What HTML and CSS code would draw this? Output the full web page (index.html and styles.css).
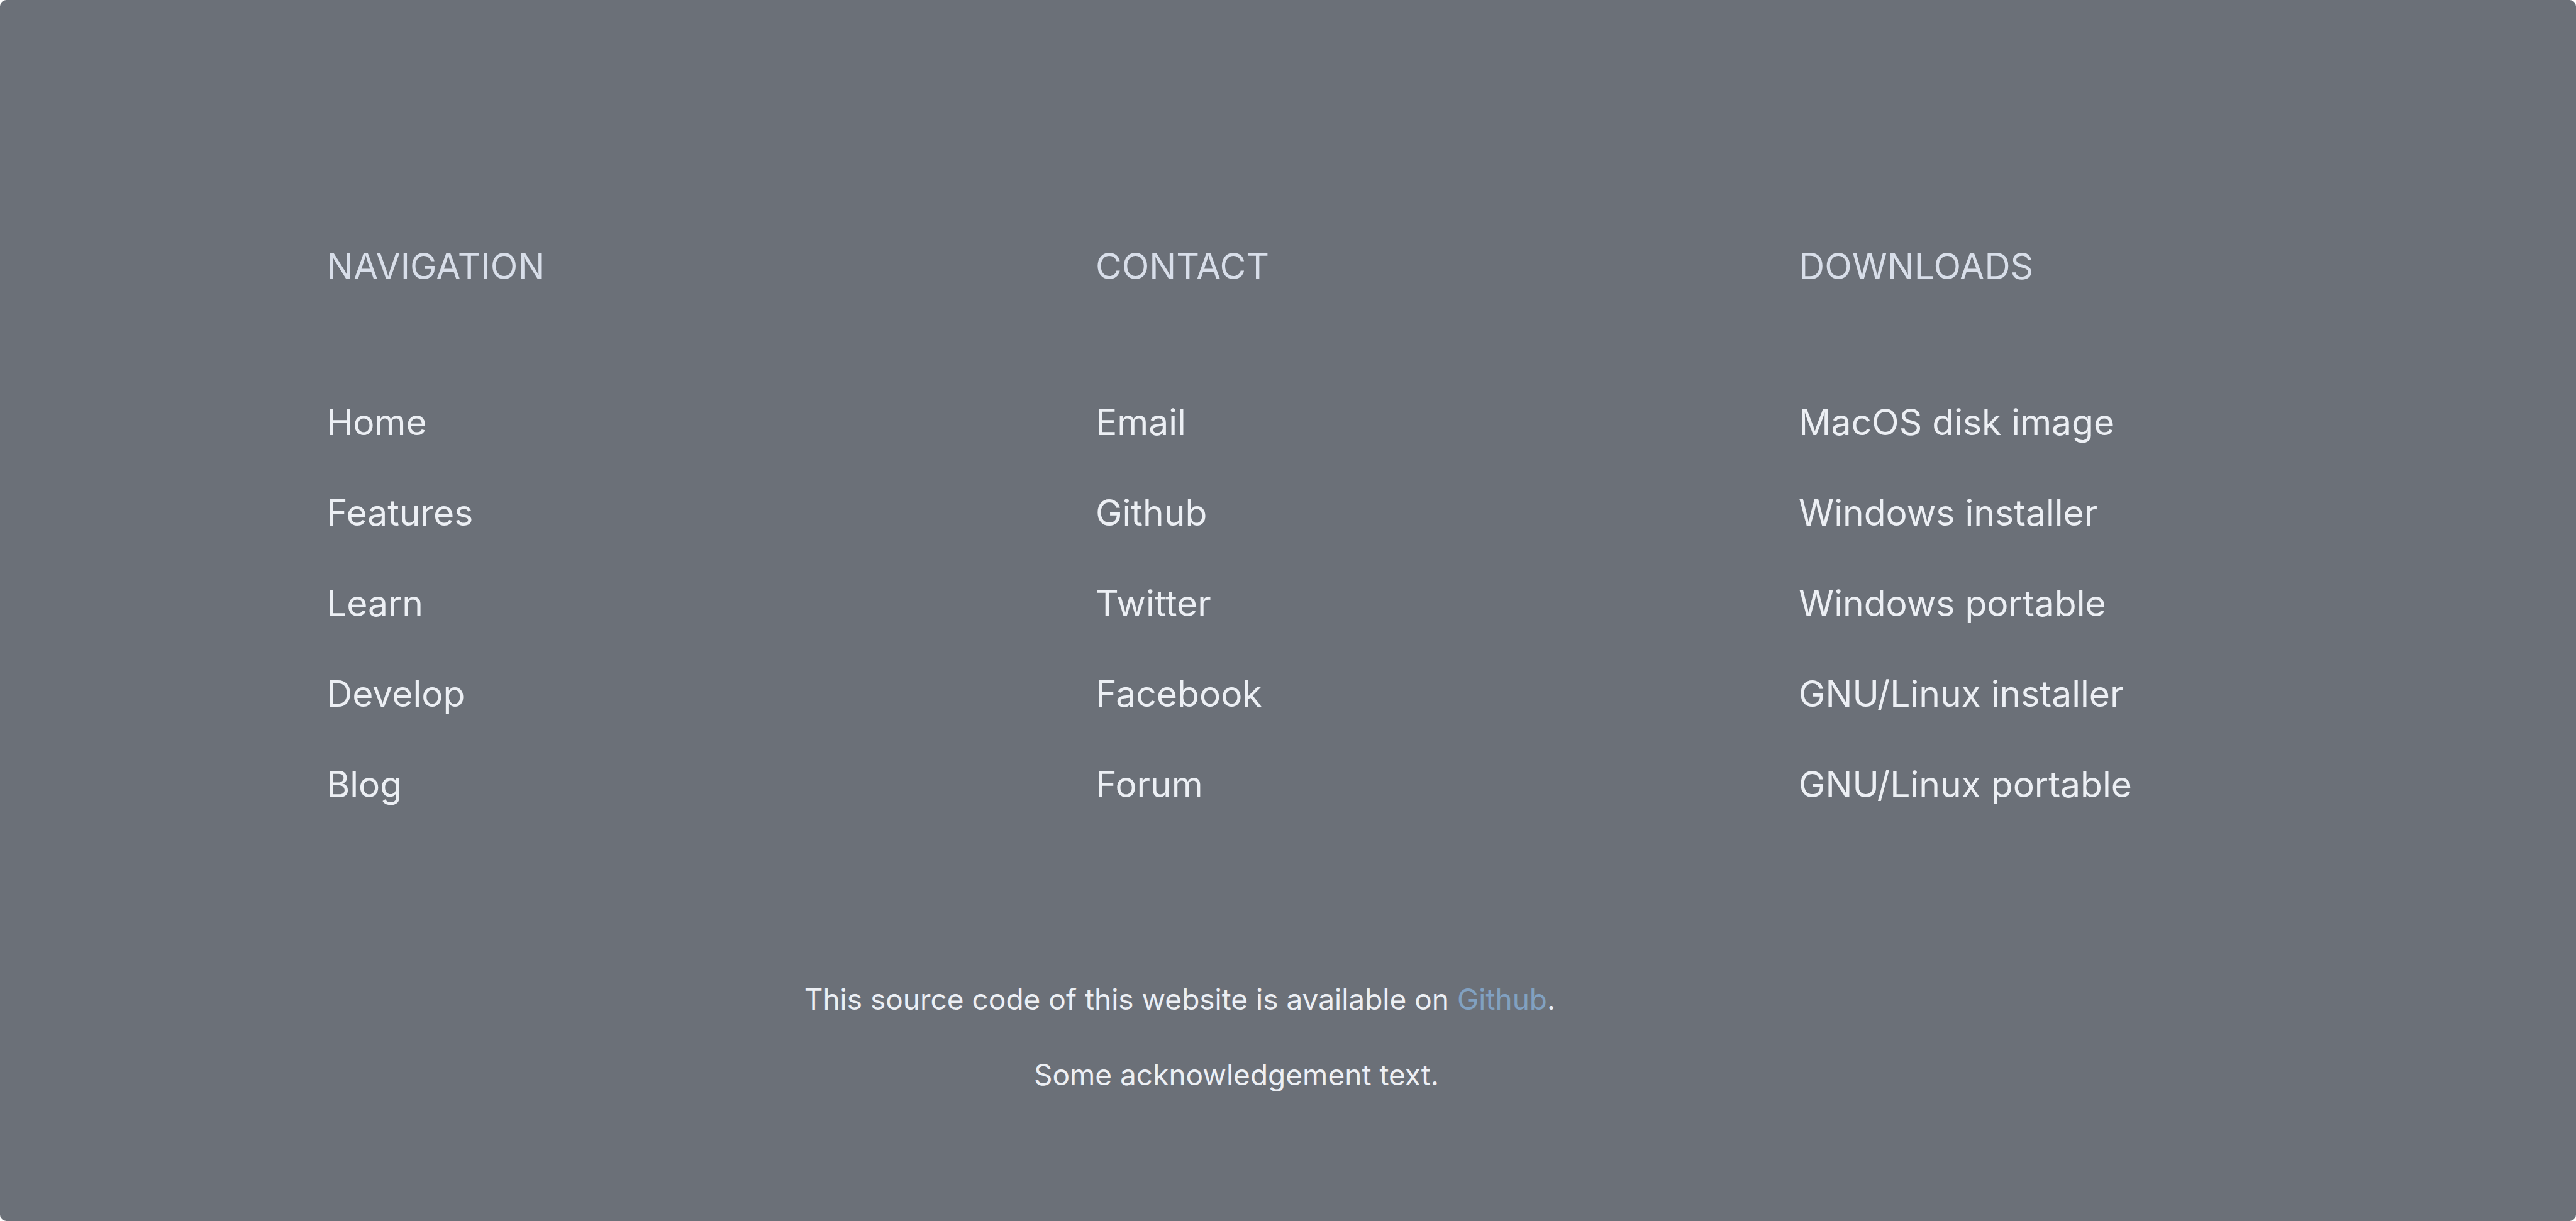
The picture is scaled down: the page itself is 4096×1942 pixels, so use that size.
FILE: index.html
```html
<!DOCTYPE html>
<html lang="en">
<head>
<meta charset="utf-8">
<title>Footer</title>
<link rel="stylesheet" href="styles.css">
</head>
<body>
<footer class="footer">
  <div class="columns">
    <nav class="column" aria-labelledby="navigation">
      <h2 class="title" id="navigation">NAVIGATION</h2>
      <ul class="links">
        <li><a href="#home">Home</a></li>
        <li><a href="#features">Features</a></li>
        <li><a href="#learn">Learn</a></li>
        <li><a href="#develop">Develop</a></li>
        <li><a href="#blog">Blog</a></li>
      </ul>
    </nav>
    <nav class="column" aria-labelledby="contact">
      <h2 class="title" id="contact">CONTACT</h2>
      <ul class="links">
        <li><a href="#email">Email</a></li>
        <li><a href="#github">Github</a></li>
        <li><a href="#twitter">Twitter</a></li>
        <li><a href="#facebook">Facebook</a></li>
        <li><a href="#forum">Forum</a></li>
      </ul>
    </nav>
    <nav class="column" aria-labelledby="downloads">
      <h2 class="title" id="downloads">DOWNLOADS</h2>
      <ul class="links">
        <li><a href="#macos">MacOS disk image</a></li>
        <li><a href="#windows-installer">Windows installer</a></li>
        <li><a href="#windows-portable">Windows portable</a></li>
        <li><a href="#linux-installer">GNU/Linux installer</a></li>
        <li><a href="#linux-portable">GNU/Linux portable</a></li>
      </ul>
    </nav>
  </div>
  <div class="notes">
    <p class="source">This source code of this website is available on <a href="#source">Github</a>.</p>
    <p class="ack">Some acknowledgement text.</p>
  </div>
</footer>
</body>
</html>
```
FILE: styles.css
```css
* {
  box-sizing: border-box;
}

body {
  margin: 0;
  background: #fff;
  font-family: Inter, "Liberation Sans", sans-serif;
  font-weight: 400;
}

.footer {
  min-height: 100vh;
  padding: 388px 519px 0;
  border-radius: 10px;
  background: #6b7078;
  color: #eceff4;
}

.columns {
  display: grid;
  grid-template-columns: 1223fr 1118fr 717fr;
}

.title {
  margin: 0 0 176px;
  font-size: 57px;
  font-weight: 400;
  line-height: 72px;
  color: #d8dee9;
}

.links {
  display: grid;
  gap: 72px;
  margin: 0;
  padding: 0;
  list-style: none;
  font-size: 57px;
  line-height: 72px;
}

.links a {
  color: inherit;
  text-decoration: none;
}

.notes {
  padding-top: 275px;
  font-size: 46px;
  line-height: 60px;
  text-align: center;
}

.notes p {
  margin: 0 0 60px;
}

.notes .source {
  padding-right: 344px;
}

.notes .ack {
  padding-right: 164px;
}

.notes a {
  color: #81a1c1;
  text-decoration: none;
}
```
